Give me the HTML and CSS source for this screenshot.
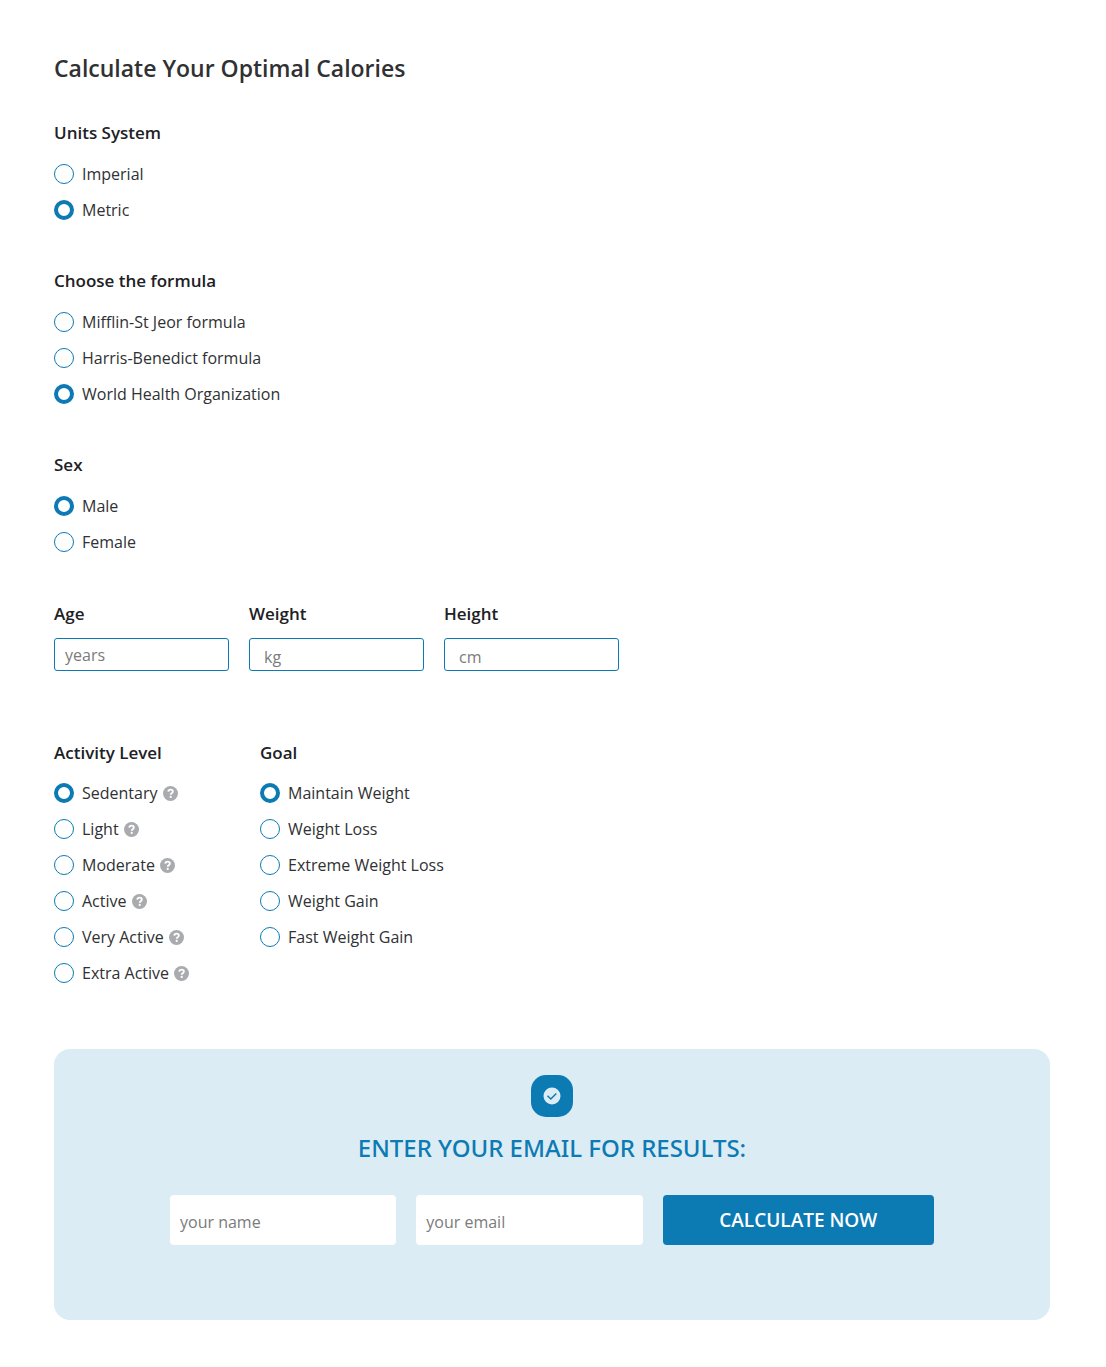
FILE: index.html
```html
<!DOCTYPE html>
<html lang="en">
<head>
<meta charset="utf-8">
<meta name="viewport" content="width=device-width, initial-scale=1">
<title>Calorie Calculator</title>
<link rel="stylesheet" href="styles.css">
</head>
<body>
<svg class="sprite" aria-hidden="true">
  <symbol id="help" viewBox="0 0 16 16">
    <circle cx="8" cy="8" r="8" fill="#a9abae"/>
    <path d="M5.6 6.1C5.8 4.6 6.8 3.9 8.1 3.9c1.4 0 2.4.8 2.4 2 0 1.800-2.300 1.700-2.300 3.400" fill="none" stroke="#fff" stroke-width="2"/>
    <circle cx="8.200" cy="11.600" r="1.200" fill="#fff"/>
  </symbol>
</svg>
<main>
  <form class="calculator">
    <h1 class="title">Calculate Your Optimal Calories</h1>

    <fieldset class="group">
      <legend class="heading">Units System</legend>
      <label class="option"><input class="radio" type="radio" name="units">Imperial</label>
      <label class="option"><input class="radio" type="radio" name="units" checked>Metric</label>
    </fieldset>

    <fieldset class="group">
      <legend class="heading">Choose the formula</legend>
      <label class="option"><input class="radio" type="radio" name="formula">Mifflin-St Jeor formula</label>
      <label class="option"><input class="radio" type="radio" name="formula">Harris-Benedict formula</label>
      <label class="option"><input class="radio" type="radio" name="formula" checked>World Health Organization</label>
    </fieldset>

    <fieldset class="group">
      <legend class="heading">Sex</legend>
      <label class="option"><input class="radio" type="radio" name="sex" checked>Male</label>
      <label class="option"><input class="radio" type="radio" name="sex">Female</label>
    </fieldset>

    <div class="measures">
      <div class="measure">
        <label class="heading" for="age">Age</label>
        <input class="field" id="age" type="text" placeholder="years">
      </div>
      <div class="measure">
        <label class="heading" for="weight">Weight</label>
        <input class="field field-unit" id="weight" type="text" placeholder="kg">
      </div>
      <div class="measure">
        <label class="heading" for="height">Height</label>
        <input class="field field-unit" id="height" type="text" placeholder="cm">
      </div>
    </div>

    <div class="choices">
      <fieldset class="group">
        <legend class="heading">Activity Level</legend>
        <label class="option"><input class="radio" type="radio" name="activity" checked>Sedentary<svg class="help"><use href="#help"/></svg></label>
        <label class="option"><input class="radio" type="radio" name="activity">Light<svg class="help"><use href="#help"/></svg></label>
        <label class="option"><input class="radio" type="radio" name="activity">Moderate<svg class="help"><use href="#help"/></svg></label>
        <label class="option"><input class="radio" type="radio" name="activity">Active<svg class="help"><use href="#help"/></svg></label>
        <label class="option"><input class="radio" type="radio" name="activity">Very Active<svg class="help"><use href="#help"/></svg></label>
        <label class="option"><input class="radio" type="radio" name="activity">Extra Active<svg class="help"><use href="#help"/></svg></label>
      </fieldset>
      <fieldset class="group">
        <legend class="heading">Goal</legend>
        <label class="option"><input class="radio" type="radio" name="goal" checked>Maintain Weight</label>
        <label class="option"><input class="radio" type="radio" name="goal">Weight Loss</label>
        <label class="option"><input class="radio" type="radio" name="goal">Extreme Weight Loss</label>
        <label class="option"><input class="radio" type="radio" name="goal">Weight Gain</label>
        <label class="option"><input class="radio" type="radio" name="goal">Fast Weight Gain</label>
      </fieldset>
    </div>

    <section class="results">
      <div class="badge">
        <svg class="check" viewBox="0 0 18 18" aria-hidden="true">
          <circle cx="9" cy="9" r="8.500" fill="#dbecf4"/>
          <path d="M4.500 8.800l3.300 3.200 5.500-5.500" fill="none" stroke="#0c7ab3" stroke-width="1.500"/>
        </svg>
      </div>
      <h2 class="results-title">ENTER YOUR EMAIL FOR RESULTS:</h2>
      <div class="contact">
        <input class="contact-field" type="text" placeholder="your name" aria-label="your name">
        <input class="contact-field" type="email" placeholder="your email" aria-label="your email">
        <button class="submit" type="button">CALCULATE NOW</button>
      </div>
    </section>
  </form>
</main>
</body>
</html>
```
FILE: styles.css
```css
* {
  box-sizing: border-box;
}

body {
  margin: 0;
  background: #fff;
  color: #303133;
  font: 16px/24px "Open Sans", "Noto Sans", sans-serif;
}

.sprite {
  position: absolute;
  width: 0;
  height: 0;
}

.calculator {
  display: flex;
  flex-direction: column;
  padding: 52px 56px 47px 54px;
}

.title {
  margin: 0 0 37px;
  font-size: 23px;
  font-weight: 600;
  line-height: 32px;
}

.group {
  min-width: 0;
  margin: 0 0 41px;
  padding: 0;
  border: 0;
}

.heading {
  display: block;
  margin: 0 0 11px;
  padding: 0;
  color: #202124;
  font-size: 17px;
  font-weight: 600;
  line-height: 24px;
}

.option {
  display: flex;
  align-items: center;
  height: 36px;
}

.radio {
  appearance: none;
  flex: none;
  width: 20px;
  height: 20px;
  margin: 0 8px 0 0;
  border: 1px solid #0c7ab3;
  border-radius: 50%;
  background: #fff;
}

.radio:checked {
  border-width: 4px;
}

.help {
  width: 15px;
  height: 15px;
  margin-left: 5px;
}

.measures {
  display: flex;
  flex-wrap: wrap;
  gap: 20px;
  margin: 1px 0 70px;
}

.measure {
  width: 175px;
}

.measure .heading {
  margin-bottom: 12px;
}

.field {
  display: block;
  width: 100%;
  height: 33px;
  padding: 0 10px;
  border: 1px solid #0c7ab3;
  border-radius: 3px;
  font: inherit;
}

.field-unit {
  padding: 4px 14px 0;
}

.field::placeholder,
.contact-field::placeholder {
  color: #7b7b7b;
  opacity: 1;
}

.choices {
  display: flex;
  flex-wrap: wrap;
  gap: 20px;
  margin-bottom: 17px;
}

.choices .group {
  flex: 0 0 186px;
}

.choices .heading {
  margin-bottom: 10px;
}

.results {
  display: flex;
  flex-direction: column;
  align-items: center;
  padding: 26px 20px 75px;
  border-radius: 16px;
  background: #dbecf4;
}

.badge {
  display: grid;
  place-items: center;
  width: 42px;
  height: 42px;
  border-radius: 15px;
  background: #0c7ab3;
}

.check {
  width: 18px;
  height: 18px;
}

.results-title {
  margin: 15px 0 31px;
  color: #0c7ab3;
  font: 500 24px/32px "Noto Sans", sans-serif;
}

.contact {
  display: grid;
  grid-template-columns: 5fr 5fr 6fr;
  gap: 20px;
  width: 100%;
  max-width: 764px;
}

.contact-field {
  min-width: 0;
  height: 50px;
  padding: 4px 10px 0;
  border: 0;
  border-radius: 4px;
  background: #fff;
  font: inherit;
}

.submit {
  height: 50px;
  padding: 0;
  border: 0;
  border-radius: 4px;
  background: #0c7ab3;
  color: #fff;
  font: inherit;
  font-size: 19px;
  font-weight: 600;
}

@media (max-width: 640px) {
  .contact {
    grid-template-columns: 1fr;
  }
}
```
